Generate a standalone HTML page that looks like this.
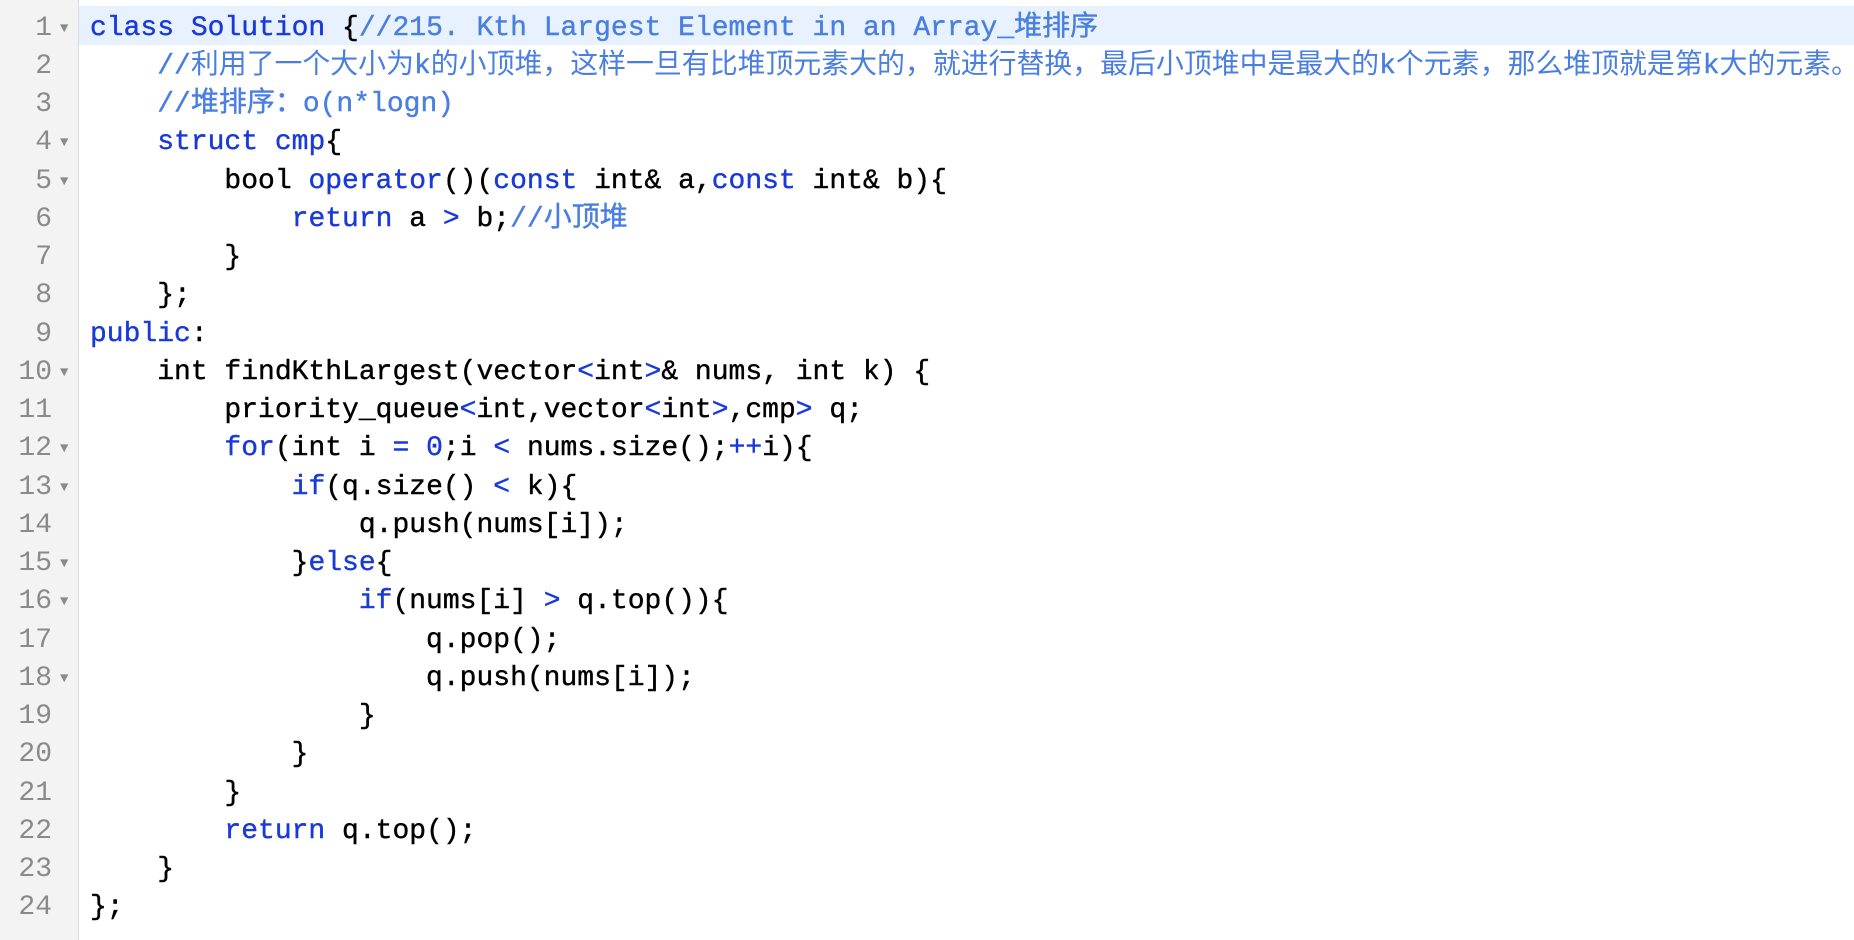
<!DOCTYPE html>
<html><head><meta charset="utf-8"><style>
html,body{margin:0;padding:0;background:#fff;width:1854px;height:940px;overflow:hidden}
.g{position:absolute;left:0;top:0;width:78px;height:940px;background:#f3f3f3;border-right:1px solid #dcdcdc}
.hl{position:absolute;left:79px;top:6px;width:1775px;height:39px;background:#e8f2fe}
.c{position:absolute;left:0;top:9.5px;font-family:"Liberation Mono","Noto Sans CJK SC",monospace;font-size:28px;line-height:38.26px;color:#000;-webkit-text-stroke:0.4px}
.l{height:38.26px;white-space:pre;position:relative}
.n{position:absolute;left:0;width:52px;text-align:right;color:#8a8a8a;-webkit-text-stroke:0}
.a{position:absolute;left:60px;top:0;color:#8a8a8a;font-size:14px;-webkit-text-stroke:0}
.t{position:absolute;left:90px}
.k{color:#1a3ad8}.m{color:#4a7fe0}.cj{-webkit-text-stroke:0;font-size:27.9px}
</style></head><body>
<div class="g"></div><div class="hl"></div>
<div class="c">
<div class="l"><span class="n">1</span><span class="a">▼</span><span class="t"><span class="k">class Solution</span> {<span class="m">//215. Kth Largest Element in an Array_堆排序</span></span></div>
<div class="l"><span class="n">2</span><span class="t">    <span class="m">//<span class="cj">利用了一个大小为</span>k<span class="cj">的小顶堆，这样一旦有比堆顶元素大的，就进行替换，最后小顶堆中是最大的</span>k<span class="cj">个元素，那么堆顶就是第</span>k<span class="cj">大的元素。</span></span></span></div>
<div class="l"><span class="n">3</span><span class="t">    <span class="m">//堆排序：o(n*logn)</span></span></div>
<div class="l"><span class="n">4</span><span class="a">▼</span><span class="t">    <span class="k">struct cmp</span>{</span></div>
<div class="l"><span class="n">5</span><span class="a">▼</span><span class="t">        bool <span class="k">operator</span>()(<span class="k">const</span> int&amp; a,<span class="k">const</span> int&amp; b){</span></div>
<div class="l"><span class="n">6</span><span class="t">            <span class="k">return</span> a <span class="k">&gt;</span> b;<span class="m">//小顶堆</span></span></div>
<div class="l"><span class="n">7</span><span class="t">        }</span></div>
<div class="l"><span class="n">8</span><span class="t">    };</span></div>
<div class="l"><span class="n">9</span><span class="t"><span class="k">public</span>:</span></div>
<div class="l"><span class="n">10</span><span class="a">▼</span><span class="t">    int findKthLargest(vector<span class="k">&lt;</span>int<span class="k">&gt;</span>&amp; nums, int k) {</span></div>
<div class="l"><span class="n">11</span><span class="t">        priority_queue<span class="k">&lt;</span>int,vector<span class="k">&lt;</span>int<span class="k">&gt;</span>,cmp<span class="k">&gt;</span> q;</span></div>
<div class="l"><span class="n">12</span><span class="a">▼</span><span class="t">        <span class="k">for</span>(int i <span class="k">=</span> <span class="k">0</span>;i <span class="k">&lt;</span> nums.size();<span class="k">++</span>i){</span></div>
<div class="l"><span class="n">13</span><span class="a">▼</span><span class="t">            <span class="k">if</span>(q.size() <span class="k">&lt;</span> k){</span></div>
<div class="l"><span class="n">14</span><span class="t">                q.push(nums[i]);</span></div>
<div class="l"><span class="n">15</span><span class="a">▼</span><span class="t">            }<span class="k">else</span>{</span></div>
<div class="l"><span class="n">16</span><span class="a">▼</span><span class="t">                <span class="k">if</span>(nums[i] <span class="k">&gt;</span> q.top()){</span></div>
<div class="l"><span class="n">17</span><span class="t">                    q.pop();</span></div>
<div class="l"><span class="n">18</span><span class="a">▼</span><span class="t">                    q.push(nums[i]);</span></div>
<div class="l"><span class="n">19</span><span class="t">                }</span></div>
<div class="l"><span class="n">20</span><span class="t">            }</span></div>
<div class="l"><span class="n">21</span><span class="t">        }</span></div>
<div class="l"><span class="n">22</span><span class="t">        <span class="k">return</span> q.top();</span></div>
<div class="l"><span class="n">23</span><span class="t">    }</span></div>
<div class="l"><span class="n">24</span><span class="t">};</span></div>
</div>
</body></html>
